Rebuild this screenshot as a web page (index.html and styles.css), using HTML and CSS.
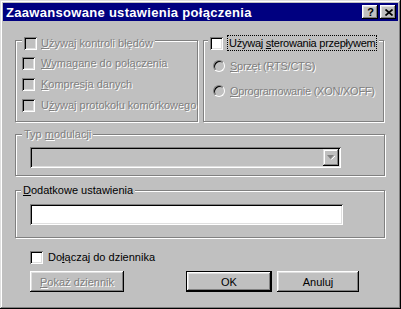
FILE: index.html
```html
<!DOCTYPE html>
<html lang="pl">
<head>
<meta charset="utf-8">
<title>Zaawansowane ustawienia połączenia</title>
<link rel="stylesheet" href="styles.css">
</head>
<body>
<div class="window">
  <div class="titlebar">
    <span class="title">Zaawansowane ustawienia połączenia</span>
    <div class="tb-buttons">
      <span class="tb-btn help">?</span>
      <span class="tb-btn close"><svg width="8" height="7" viewBox="0 0 8 7"><path d="M0.5 0.5 L7.5 6.5 M7.5 0.5 L0.5 6.5" stroke="#000" stroke-width="1.7" fill="none"/></svg></span>
    </div>
  </div>
  <div class="content">
    <div class="top-row">
      <div class="group g-error">
        <div class="legend legend-check">
          <span class="cb disabled"></span><span class="label disabled"><u>U</u>żywaj kontroli błędów</span>
        </div>
        <div class="opt first"><span class="cb disabled"></span><span class="label disabled"><u>W</u>ymagane do połączenia</span></div>
        <div class="opt"><span class="cb disabled"></span><span class="label disabled"><u>K</u>ompresja danych</span></div>
        <div class="opt"><span class="cb disabled"></span><span class="label disabled">U<u>ż</u>ywaj protokołu komórkowego</span></div>
      </div>
      <div class="group g-flow">
        <div class="legend legend-check flow">
          <span class="cb"></span><span class="label focus">Używaj <u>s</u>terowania przepływem</span>
        </div>
        <div class="ropt first"><span class="radio"></span><span class="label disabled"><u>S</u>przęt (RTS/CTS)</span></div>
        <div class="ropt"><span class="radio"></span><span class="label disabled"><u>O</u>programowanie (XON/XOFF)</span></div>
      </div>
    </div>

    <div class="group g-mod">
      <span class="legend text-legend disabled">Typ <u>m</u>odulacji</span>
      <div class="combo">
        <span class="combo-btn"><svg width="8" height="5" viewBox="0 0 8 5"><path d="M0 0 H7 L3.5 4 Z" fill="#808080"/><path d="M4.5 4.5 L8 1" stroke="#fff" stroke-width="1"/></svg></span>
      </div>
    </div>

    <div class="group g-extra">
      <span class="legend text-legend"><u>D</u>odatkowe ustawienia</span>
      <div class="textbox"></div>
    </div>

    <div class="log-row">
      <span class="cb"></span><span class="label">Do<u>ł</u>ączaj do dziennika</span>
    </div>

    <div class="buttons">
      <span class="btn btn-log disabled"><span><u>P</u>okaż dziennik</span></span>
      <span class="btn btn-ok">OK</span>
      <span class="btn btn-cancel">Anuluj</span>
    </div>
  </div>
</div>
</body>
</html>
```
FILE: styles.css
```css
html, body {
  margin: 0;
  padding: 0;
  background: #c0c0c0;
}

body {
  font-family: "Liberation Sans", Arial, sans-serif;
  font-size: 11px;
  color: #000;
}

.window {
  width: 401px;
  height: 309px;
  box-sizing: border-box;
  padding: 3px;
  background: #c0c0c0;
  box-shadow: inset -1px -1px #000, inset 1px 1px #dfdfdf, inset -2px -2px #808080, inset 2px 2px #fff;
  display: flex;
  flex-direction: column;
}

.titlebar {
  height: 18px;
  background: #000080;
  display: flex;
  align-items: center;
  justify-content: space-between;
  padding: 0 2px 0 3px;
}

.title {
  color: #fff;
  font-weight: bold;
  font-size: 13px;
  letter-spacing: 0.3px;
}

.tb-buttons {
  display: flex;
  gap: 2px;
}

.tb-btn {
  width: 16px;
  height: 14px;
  box-sizing: border-box;
  background: #c0c0c0;
  box-shadow: inset -1px -1px #000, inset 1px 1px #fff, inset -2px -2px #808080, inset 2px 2px #dfdfdf;
  display: flex;
  align-items: center;
  justify-content: center;
}

.help {
  font-weight: bold;
  font-size: 11px;
  line-height: 14px;
  padding-left: 1px;
}

.close svg {
  display: block;
  margin-left: 1px;
}

.content {
  margin: 0 13px 0 12px;
  display: flex;
  flex-direction: column;
}

.top-row {
  margin-top: 19px;
  display: flex;
  gap: 5px;
}

.group {
  border: 1px solid #808080;
  box-shadow: inset 1px 1px #fff, 1px 1px #fff;
  box-sizing: border-box;
  display: flex;
  flex-direction: column;
  padding: 0 6px;
}

.g-error {
  width: 183px;
  height: 82px;
}

.g-flow {
  width: 181px;
  height: 82px;
}

.g-flow .label {
  letter-spacing: -0.25px;
}

.legend {
  align-self: flex-start;
  background: #c0c0c0;
  line-height: 13px;
}

.legend-check {
  display: flex;
  align-items: center;
  padding: 0 2px;
  margin-top: -4px;
  gap: 4px;
}

.legend-check.flow {
  margin-top: -6px;
  margin-left: -2px;
  height: 16px;
  gap: 4px;
}

.label {
  white-space: nowrap;
  line-height: 13px;
}

.label u {
  text-decoration-thickness: 1px;
  text-underline-offset: 1px;
}

.disabled {
  color: #808080;
  text-shadow: 1px 1px 0 #fff;
}

.focus {
  border: 1px dotted #000;
  padding: 0 1px;
  line-height: 14px;
}

.cb {
  width: 13px;
  height: 13px;
  flex: none;
  box-sizing: border-box;
  background: #fff;
  box-shadow: inset 1px 1px #808080, inset -1px -1px #fff, inset 2px 2px #000, inset -2px -2px #dfdfdf;
}

.cb.disabled {
  background: #c0c0c0;
}

.opt {
  display: flex;
  align-items: center;
  gap: 6px;
  height: 13px;
  margin-top: 8px;
}

.opt.first {
  margin-top: 7px;
}

.ropt {
  display: flex;
  align-items: center;
  gap: 5px;
  height: 12px;
  margin-top: 13px;
  margin-left: 3px;
}

.ropt.first {
  margin-top: 9px;
}

.radio {
  width: 12px;
  height: 12px;
  flex: none;
  box-sizing: border-box;
  border-radius: 50%;
  border: 1px solid;
  border-color: #808080 #fff #fff #808080;
  background: #c0c0c0;
  box-shadow: inset 1px 1px 0 #000;
}

.g-mod {
  margin-top: 12px;
  height: 42px;
}

.text-legend {
  margin-top: -7px;
  margin-left: 0;
  padding: 0 2px;
  white-space: nowrap;
}

.combo {
  margin-top: 6px;
  margin-left: 8px;
  width: 311px;
  height: 21px;
  box-sizing: border-box;
  background: #c0c0c0;
  box-shadow: inset 1px 1px #808080, inset -1px -1px #fff, inset 2px 2px #000, inset -2px -2px #dfdfdf;
  display: flex;
  justify-content: flex-end;
  align-items: center;
  padding-right: 2px;
}

.combo-btn {
  width: 16px;
  height: 17px;
  box-sizing: border-box;
  background: #c0c0c0;
  box-shadow: inset -1px -1px #000, inset 1px 1px #dfdfdf, inset -2px -2px #808080, inset 2px 2px #fff;
  display: flex;
  align-items: center;
  justify-content: center;
}

.combo-btn svg {
  display: block;
}

.g-extra {
  margin-top: 14px;
  height: 48px;
}

.g-extra .text-legend {
  margin-left: -1px;
}

.textbox {
  margin-top: 7px;
  margin-left: 8px;
  width: 313px;
  height: 21px;
  box-sizing: border-box;
  background: #fff;
  box-shadow: inset 1px 1px #808080, inset -1px -1px #fff, inset 2px 2px #000, inset -2px -2px #dfdfdf;
}

.log-row {
  margin-top: 13px;
  padding-left: 15px;
  display: flex;
  align-items: center;
  gap: 5px;
  height: 13px;
}

.buttons {
  margin-top: 7px;
  padding: 0 26px 0 15px;
  display: flex;
}

.btn {
  height: 21px;
  box-sizing: border-box;
  background: #c0c0c0;
  box-shadow: inset -1px -1px #000, inset 1px 1px #fff, inset -2px -2px #808080, inset 2px 2px #dfdfdf;
  display: flex;
  align-items: center;
  justify-content: center;
  white-space: nowrap;
}

.btn-log {
  width: 94px;
}

.btn-ok {
  width: 86px;
  margin-left: auto;
  border: 1px solid #000;
}

.btn-cancel {
  width: 82px;
  margin-left: 5px;
}
```
